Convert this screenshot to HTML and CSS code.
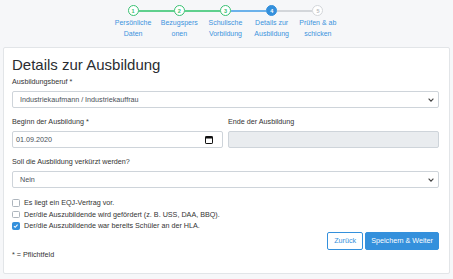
FILE: index.html
```html
<!DOCTYPE html>
<html lang="de">

<head>
    <meta charset="UTF-8">
    <meta name="viewport" content="width=device-width, initial-scale=1.0">
    <title>Details zur Ausbildung</title>
    <link rel="stylesheet" href="styles.css">
</head>

<body>
    <!-- Fortschritt -->
    <div class="stepper">
        <div class="stepper-track">
            <span class="dot done">1</span>
            <span class="bar done"></span>
            <span class="dot done">2</span>
            <span class="bar done"></span>
            <span class="dot done">3</span>
            <span class="bar active"></span>
            <span class="dot active">4</span>
            <span class="bar"></span>
            <span class="dot">5</span>
        </div>
        <div class="stepper-labels">
            <span>Persönliche Daten</span>
            <span>Bezugspersonen</span>
            <span>Schulische Vorbildung</span>
            <span>Details zur Ausbildung</span>
            <span>Prüfen &amp; ab schicken</span>
        </div>
    </div>

    <!-- Formular -->
    <div class="card">
        <h2 class="title">Details zur Ausbildung</h2>

        <div class="group">
            <div class="label">Ausbildungsberuf *</div>
            <div class="control select">
                <span>Industriekaufmann / Industriekauffrau</span>
                <svg width="6" height="4" viewBox="0 0 6 4"><path d="M0.6 0.6 L3 3.2 L5.4 0.6" fill="none" stroke="#444" stroke-width="1.1"/></svg>
            </div>
        </div>

        <div class="group row">
            <div class="col">
                <div class="label">Beginn der Ausbildung *</div>
                <div class="control date">
                    <span>01.09.2020</span>
                    <svg width="8" height="8" viewBox="0 0 8 8"><rect x="0.5" y="0.5" width="7" height="7" rx="0.6" fill="none" stroke="#111"/><rect x="0.5" y="0.5" width="7" height="2" fill="#111"/></svg>
                </div>
            </div>
            <div class="col">
                <div class="label">Ende der Ausbildung</div>
                <div class="control disabled"></div>
            </div>
        </div>

        <div class="group">
            <div class="label">Soll die Ausbildung verkürzt werden?</div>
            <div class="control select">
                <span>Nein</span>
                <svg width="6" height="4" viewBox="0 0 6 4"><path d="M0.6 0.6 L3 3.2 L5.4 0.6" fill="none" stroke="#444" stroke-width="1.1"/></svg>
            </div>
        </div>

        <div class="checks">
            <div class="check"><span class="box"></span>Es liegt ein EQJ-Vertrag vor.</div>
            <div class="check"><span class="box"></span>Der/die Auszubildende wird gefördert (z. B. USS, DAA, BBQ).</div>
            <div class="check"><span class="box checked"><svg width="6" height="6" viewBox="0 0 6 6"><path d="M1 3.2 L2.4 4.5 L5 1.5" fill="none" stroke="#fff" stroke-width="1.1"/></svg></span>Der/die Auszubildende war bereits Schüler an der HLA.</div>
        </div>

        <div class="actions">
            <a href="#" class="btn btn-outline">Zurück</a>
            <a href="#" class="btn btn-primary">Speichern &amp; Weiter</a>
        </div>

        <p class="hint">* = Pflichtfeld</p>
    </div>
</body>

</html>
```

FILE: styles.css
```css
* {
    margin: 0;
    padding: 0;
    box-sizing: border-box;
}

body {
    background: #f6f7f9;
    font-family: "Liberation Sans", Arial, sans-serif;
    color: #212529;
    width: 453px;
    height: 279px;
    overflow: hidden;
}

a {
    text-decoration: none;
}

/* Fortschritt */
.stepper {
    width: 233px;
    margin: 0 auto;
    padding: 5px 2px 0 0;
    height: 47px;
}

.stepper-track {
    display: flex;
    align-items: center;
    padding: 0 17.6px;
}

.dot {
    width: 11px;
    height: 11px;
    border-radius: 50%;
    border: 1.5px solid #d3d6da;
    background: #fff;
    color: #b9bcc0;
    font-size: 5.5px;
    font-weight: bold;
    display: flex;
    align-items: center;
    justify-content: center;
    flex-shrink: 0;
}

.dot.done {
    border-color: #38c172;
    color: #38c172;
}

.dot.active {
    border-color: #3490dc;
    background: #3490dc;
    color: #fff;
}

.bar {
    flex: 1;
    height: 2px;
    background: #d3d6da;
}

.bar.done {
    background: #5fd08e;
}

.bar.active {
    background: #6cb2eb;
}

.stepper-labels {
    display: flex;
    margin-top: 2px;
}

.stepper-labels span {
    width: 46.2px;
    padding: 0 3px;
    text-align: center;
    font-size: 7px;
    line-height: 10.5px;
    color: #3c93dd;
    overflow-wrap: anywhere;
}

/* Karte */
.card {
    margin: 0 3px;
    height: 227px;
    background: #fff;
    border: 1px solid #e2e5e8;
    border-radius: 2px;
    padding: 8px 10px 0 8px;
}

.title {
    font-size: 15px;
    font-weight: normal;
    line-height: 17px;
    color: #2a2d31;
    margin-bottom: 4px;
}

.group {
    margin-bottom: 9px;
}

.row {
    display: grid;
    grid-template-columns: 1fr 1fr;
    gap: 5px;
}

.label {
    font-size: 7.2px;
    line-height: 10px;
    color: #333;
    margin-bottom: 4px;
}

.control {
    height: 17px;
    border: 1px solid #ced4da;
    border-radius: 2px;
    background: #fff;
    display: flex;
    align-items: center;
    justify-content: space-between;
    padding: 0 4px 0 7px;
    font-size: 7.2px;
    color: #495057;
}

.control.select svg {
    margin-top: 1px;
}

.control.date {
    padding: 0 9px 0 3px;
}

.control.disabled {
    background: #e9ecef;
}

.checks {
    margin-top: 8px;
}

.check {
    display: flex;
    align-items: center;
    height: 11.6px;
    font-size: 7.2px;
    color: #333;
}

.box {
    width: 7.5px;
    height: 7.5px;
    border: 1px solid #adb5bd;
    border-radius: 1.5px;
    background: #fff;
    margin-right: 4.5px;
    display: flex;
    align-items: center;
    justify-content: center;
}

.box.checked {
    background: #3490dc;
    border-color: #3490dc;
}

.actions {
    display: flex;
    justify-content: flex-end;
    gap: 2px;
}

.btn {
    height: 18px;
    padding: 0 5px;
    border: 1px solid #3490dc;
    border-radius: 2px;
    font-size: 7.2px;
    display: flex;
    align-items: center;
}

.btn-outline {
    background: #fff;
    color: #3490dc;
    padding: 0 6px;
}

.btn-primary {
    background: #3490dc;
    color: #fff;
}

.hint {
    font-size: 7.2px;
    line-height: 10px;
    color: #333;
    margin-top: 0.5px;
}
```
